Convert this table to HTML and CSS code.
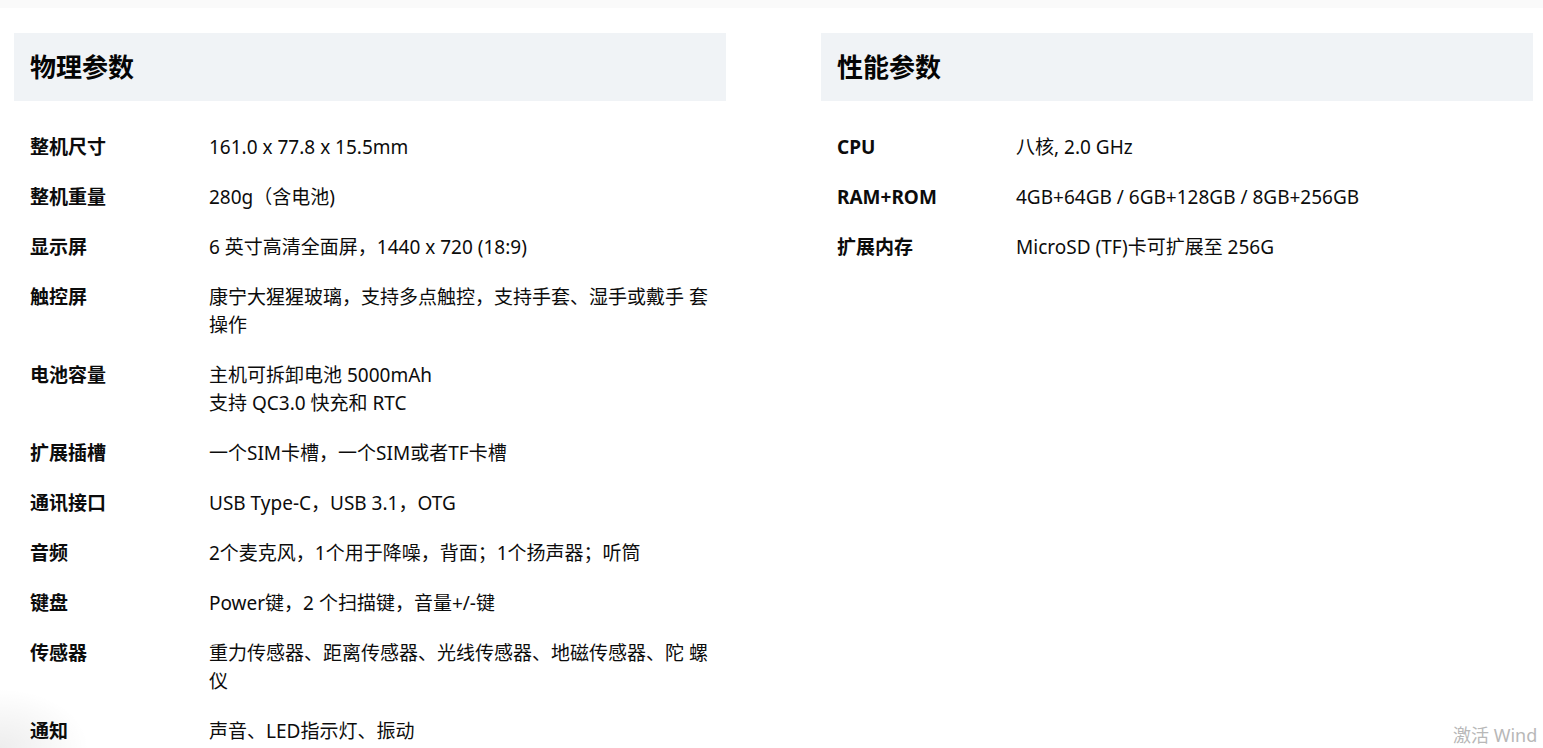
FILE: index.html
```html
<!DOCTYPE html>
<html lang="zh-CN">
<head>
<meta charset="utf-8">
<title>参数</title>
<link rel="stylesheet" href="styles.css">
</head>
<body>
<div class="topbar"></div>
<main class="specs">
  <section class="group">
    <h2 class="group-title">物理参数</h2>
    <dl class="rows">
      <div class="row"><dt>整机尺寸</dt><dd>161.0 x 77.8 x 15.5mm</dd></div>
      <div class="row"><dt>整机重量</dt><dd>280g（含电池)</dd></div>
      <div class="row"><dt>显示屏</dt><dd>6 英寸高清全面屏，1440 x 720 (18:9)</dd></div>
      <div class="row"><dt>触控屏</dt><dd>康宁大猩猩玻璃，支持多点触控，支持手套、湿手或戴手 套操作</dd></div>
      <div class="row"><dt>电池容量</dt><dd>主机可拆卸电池 5000mAh<br>支持 QC3.0 快充和 RTC</dd></div>
      <div class="row"><dt>扩展插槽</dt><dd>一个SIM卡槽，一个SIM或者TF卡槽</dd></div>
      <div class="row"><dt>通讯接口</dt><dd>USB Type-C，USB 3.1，OTG</dd></div>
      <div class="row"><dt>音频</dt><dd>2个麦克风，1个用于降噪，背面；1个扬声器；听筒</dd></div>
      <div class="row"><dt>键盘</dt><dd>Power键，2 个扫描键，音量+/-键</dd></div>
      <div class="row"><dt>传感器</dt><dd>重力传感器、距离传感器、光线传感器、地磁传感器、陀 螺仪</dd></div>
      <div class="row"><dt>通知</dt><dd>声音、LED指示灯、振动</dd></div>
    </dl>
  </section>
  <section class="group">
    <h2 class="group-title">性能参数</h2>
    <dl class="rows">
      <div class="row"><dt>CPU</dt><dd>八核, 2.0 GHz</dd></div>
      <div class="row"><dt>RAM+ROM</dt><dd>4GB+64GB / 6GB+128GB / 8GB+256GB</dd></div>
      <div class="row"><dt>扩展内存</dt><dd>MicroSD (TF)卡可扩展至 256G</dd></div>
    </dl>
  </section>
</main>
<div class="corner-shade"></div>
<div class="watermark">激活 Wind</div>
</body>
</html>
```
FILE: styles.css
```css
html, body {
  margin: 0;
  padding: 0;
  background: #ffffff;
  overflow: hidden;
}
body {
  font-family: "Noto Sans", "Noto Sans CJK SC", sans-serif;
  color: #0c0c0c;
  height: 748px;
  position: relative;
}
.topbar {
  height: 8px;
  background: #fafafa;
}
.specs {
  display: grid;
  grid-template-columns: 712px 712px;
  column-gap: 95px;
  padding: 25px 0 0 14px;
}
.group-title {
  margin: 0;
  height: 68px;
  line-height: 68px;
  padding-left: 16px;
  background: #f0f3f6;
  font-size: 26px;
  font-weight: 700;
  color: #050505;
}
.rows {
  margin: 21px 0 0 0;
  padding: 0;
}
.row {
  display: grid;
  grid-template-columns: 179px 1fr;
  padding: 11px 16px 11px 16px;
  font-size: 19px;
  line-height: 28px;
}
.row dt {
  font-weight: 700;
  margin: 0;
}
.row dd {
  margin: 0;
  font-weight: 400;
}
.corner-shade {
  position: absolute;
  left: 0;
  bottom: 0;
  width: 90px;
  height: 60px;
  background: radial-gradient(ellipse at 0% 100%, rgba(0,0,0,0.07), rgba(0,0,0,0) 70%);
  pointer-events: none;
}
.watermark {
  position: absolute;
  left: 1453px;
  top: 721px;
  font-size: 18px;
  color: #b8b8b8;
  white-space: nowrap;
}
```
